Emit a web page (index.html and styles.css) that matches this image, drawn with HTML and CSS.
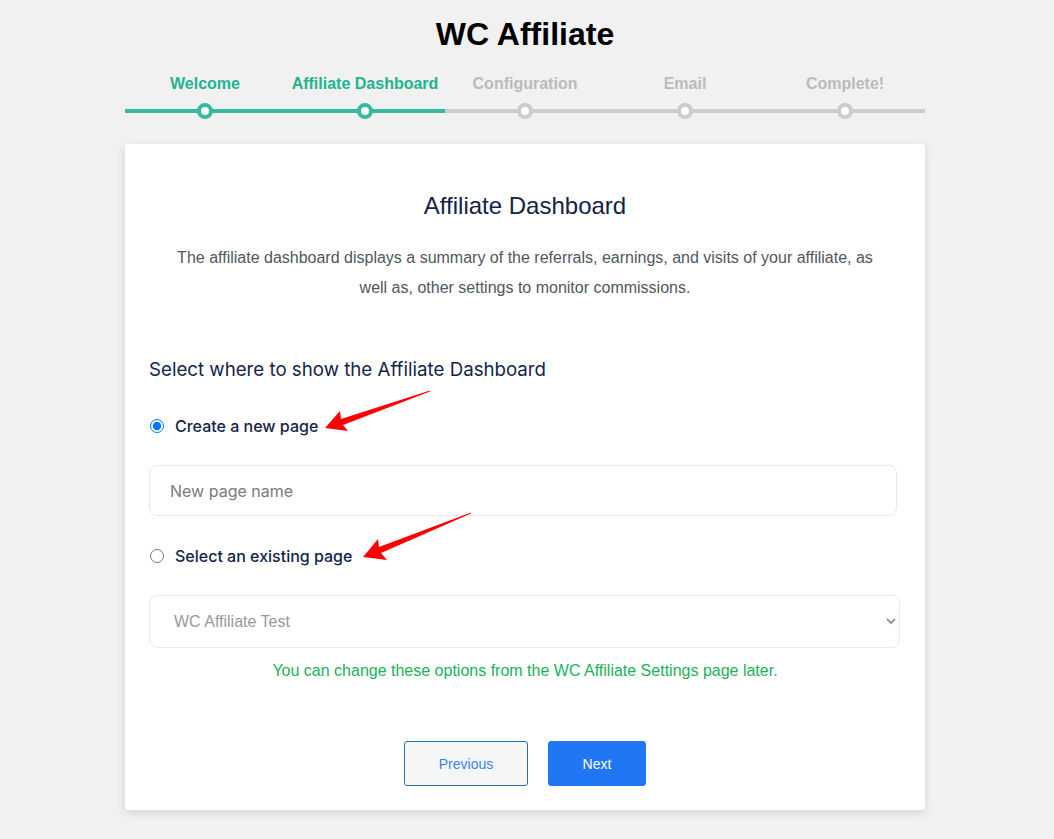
FILE: index.html
```html
<!DOCTYPE html>
<html lang="en">
<head>
    <meta charset="UTF-8">
    <meta name="viewport" content="width=device-width, initial-scale=1.0">
    <title>WC Affiliate - Setup</title>
    <link rel="stylesheet" href="styles.css">
</head>
<body>
    <div class="wizard">
        <h1 class="brand">WC Affiliate</h1>

        <ul class="steps">
            <li class="step done"><span class="step-label">Welcome</span><span class="step-track"><i class="dot"></i></span></li>
            <li class="step done"><span class="step-label">Affiliate Dashboard</span><span class="step-track"><i class="dot"></i></span></li>
            <li class="step"><span class="step-label">Configuration</span><span class="step-track"><i class="dot"></i></span></li>
            <li class="step"><span class="step-label">Email</span><span class="step-track"><i class="dot"></i></span></li>
            <li class="step"><span class="step-label">Complete!</span><span class="step-track"><i class="dot"></i></span></li>
        </ul>

        <div class="card">
            <h2>Affiliate Dashboard</h2>
            <p class="intro">The affiliate dashboard displays a summary of the referrals, earnings, and visits of your affiliate, as well as, other settings to monitor commissions.</p>

            <form class="dashboard-form">
                <h3>Select where to show the Affiliate Dashboard</h3>

                <label class="option">
                    <input type="radio" name="dashboard_page" value="new" checked>
                    Create a new page
                </label>
                <input type="text" class="field" name="new_page" placeholder="New page name">

                <label class="option">
                    <input type="radio" name="dashboard_page" value="existing">
                    Select an existing page
                </label>
                <select class="field field-select" name="existing_page" disabled>
                    <option>WC Affiliate Test</option>
                </select>

                <p class="note">You can change these options from the WC Affiliate Settings page later.</p>

                <div class="actions">
                    <button type="button" class="btn btn-prev">Previous</button>
                    <button type="submit" class="btn btn-next">Next</button>
                </div>
            </form>

            <!-- annotation arrows -->
            <svg class="marks" width="800" height="666" viewBox="0 0 800 666">
                <polygon points="200,284 215,267 216,275 305,246.5 305,247.5 218,281 223,287" fill="#ff0000"/>
                <polygon points="238,413 253,395 254,403 346,368.5 346,369.5 256,409 262,416" fill="#ff0000"/>
            </svg>
        </div>
    </div>
</body>
</html>
```

FILE: styles.css
```css
body {
    font-family: "Liberation Sans", Arial, sans-serif;
    margin: 0;
    padding: 16px 4px 40px 0;
    background-color: #f1f1f1;
}

.wizard {
    width: 800px;
    margin: 0 auto;
}

.brand {
    margin: 0;
    font-size: 32px;
    line-height: 37px;
    text-align: center;
    color: #000;
}

.steps {
    display: flex;
    list-style: none;
    margin: 22px 0 25px;
    padding: 0;
}

.step {
    flex: 1;
    display: flex;
    flex-direction: column;
    align-items: center;
    gap: 10px;
}

.step-label {
    font-size: 16px;
    line-height: 18px;
    font-weight: bold;
    color: #bbbbbb;
}

.step-track {
    position: relative;
    align-self: stretch;
    height: 16px;
    display: flex;
    justify-content: center;
    align-items: center;
}

.step-track::before {
    content: "";
    position: absolute;
    left: 0;
    right: 0;
    top: 6px;
    height: 4px;
    background: #cccccc;
}

.dot {
    position: relative;
    width: 8px;
    height: 8px;
    border: 4px solid #cccccc;
    border-radius: 50%;
    background: #fff;
}

.step.done .step-label {
    color: #1fb38e;
}

.step.done .step-track::before {
    background: #36b99c;
}

.step.done .dot {
    border-color: #36b99c;
}

.card {
    position: relative;
    background: #fff;
    padding: 47px 24px 24px;
    border-radius: 3px;
    box-shadow: 0 3px 10px rgba(0, 0, 0, 0.12);
}

.card h2 {
    margin: 0;
    font-size: 24px;
    line-height: 29px;
    font-weight: normal;
    text-align: center;
    color: #132346;
}

.intro {
    margin: 23px 0 0;
    padding: 0 20px;
    font-size: 16px;
    line-height: 30px;
    text-align: center;
    color: #50575e;
}

.dashboard-form {
    display: flex;
    flex-direction: column;
    font-family: Inter, "Noto Sans", sans-serif;
}

.dashboard-form h3 {
    margin: 53px 0 0;
    font-size: 18.7px;
    line-height: 28px;
    font-weight: normal;
    color: #14244a;
}

.option {
    display: flex;
    align-items: center;
    gap: 11px;
    height: 24px;
    font-size: 16px;
    font-weight: 500;
    color: #14244a;
}

.option input {
    width: 14px;
    height: 14px;
    margin: 0 0 0 1px;
}

.dashboard-form h3 + .option {
    margin-top: 30px;
}

.field {
    box-sizing: border-box;
    margin-top: 27px;
    border: 1px solid #e9e9e9;
    border-radius: 8px;
    background: #fff;
    font-size: 16px;
}

input.field {
    width: 748px;
    height: 51px;
    padding: 0 20px;
    margin-bottom: 28px;
    font-family: Inter, "Noto Sans", sans-serif;
    color: #333;
}

input.field::placeholder {
    color: #7a7a7a;
}

.field-select {
    width: 751px;
    height: 53px;
    padding: 0 20px;
    font-family: "Liberation Sans", Arial, sans-serif;
    color: #999;
}

.field-select:disabled {
    background: #fff;
    color: #999;
    opacity: 1;
}

.note {
    margin: 13px 0 0;
    font-family: "Liberation Sans", Arial, sans-serif;
    font-size: 16px;
    line-height: 20px;
    text-align: center;
    color: #19b25a;
}

.actions {
    display: flex;
    justify-content: center;
    gap: 20px;
    margin-top: 60px;
}

.btn {
    height: 45px;
    border-radius: 3px;
    font-family: "Liberation Sans", Arial, sans-serif;
    font-size: 14px;
    cursor: pointer;
}

.btn-prev {
    width: 124px;
    background: #f5f7f7;
    border: 1px solid #2c6ea6;
    color: #3a80f4;
}

.btn-next {
    width: 98px;
    background: #2177f3;
    border: 1px solid #2177f3;
    color: #fff;
}

.marks {
    position: absolute;
    left: 0;
    top: 0;
    pointer-events: none;
}
```
